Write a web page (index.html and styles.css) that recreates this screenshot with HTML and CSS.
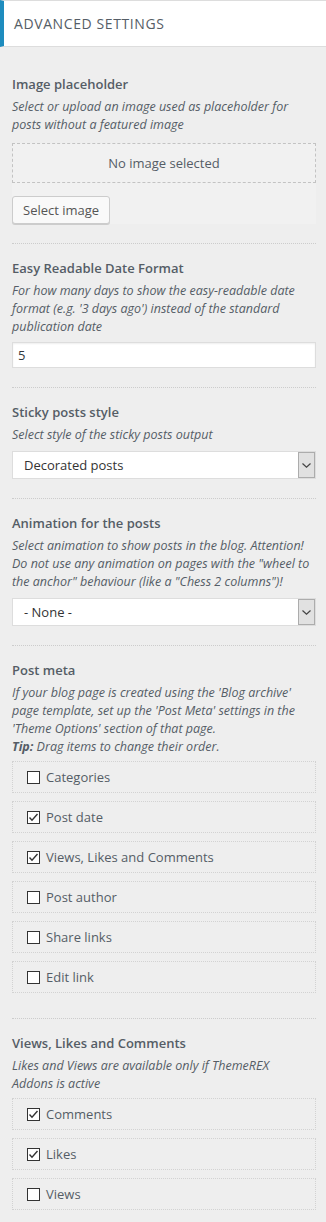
FILE: index.html
```html
<!DOCTYPE html>
<html lang="en">
<head>
  <meta charset="UTF-8">
  <meta name="viewport" content="width=device-width, initial-scale=1.0">
  <title>Advanced Settings</title>
  <link rel="stylesheet" href="styles.css">
</head>
<body>
  <h3 class="section-title">Advanced Settings</h3>

  <ul class="controls">
    <li class="control">
      <span class="control-title">Image placeholder</span>
      <span class="control-desc">Select or upload an image used as placeholder for<br>posts without a featured image</span>
      <div class="media-view">
        <div class="placeholder">No image selected</div>
        <div class="media-actions">
          <button type="button" class="button">Select image</button>
        </div>
      </div>
    </li>

    <li class="control">
      <span class="control-title">Easy Readable Date Format</span>
      <span class="control-desc">For how many days to show the easy-readable date<br>format (e.g. '3 days ago') instead of the standard<br>publication date</span>
      <input type="text" class="text-input" value="5">
    </li>

    <li class="control">
      <span class="control-title">Sticky posts style</span>
      <span class="control-desc">Select style of the sticky posts output</span>
      <div class="select-wrap">
        <select>
          <option selected>Decorated posts</option>
          <option>Inherit</option>
          <option>Columns</option>
        </select>
        <span class="select-arrow">
          <svg width="9" height="5" viewBox="0 0 9 5"><polyline points="0.5,0.5 4.5,4.2 8.5,0.5" fill="none" stroke="#444" stroke-width="1.2"/></svg>
        </span>
      </div>
    </li>

    <li class="control">
      <span class="control-title">Animation for the posts</span>
      <span class="control-desc">Select animation to show posts in the blog. Attention!<br>Do not use any animation on pages with the "wheel to<br>the anchor" behaviour (like a "Chess 2 columns")!</span>
      <div class="select-wrap">
        <select>
          <option selected>- None -</option>
          <option>Fade in</option>
          <option>Fade in up</option>
        </select>
        <span class="select-arrow">
          <svg width="9" height="5" viewBox="0 0 9 5"><polyline points="0.5,0.5 4.5,4.2 8.5,0.5" fill="none" stroke="#444" stroke-width="1.2"/></svg>
        </span>
      </div>
    </li>

    <li class="control">
      <span class="control-title">Post meta</span>
      <span class="control-desc">If your blog page is created using the 'Blog archive'<br>page template, set up the 'Post Meta' settings in the<br>'Theme Options' section of that page.<br><b>Tip:</b> Drag items to change their order.</span>
      <ul class="sortable" id="post-meta"></ul>
    </li>

    <li class="control">
      <span class="control-title">Views, Likes and Comments</span>
      <span class="control-desc">Likes and Views are available only if ThemeREX<br>Addons is active</span>
      <ul class="sortable" id="counters"></ul>
    </li>
  </ul>

  <script>
    const postMeta = [
      { label: 'Categories', checked: false },
      { label: 'Post date', checked: true },
      { label: 'Views, Likes and Comments', checked: true },
      { label: 'Post author', checked: false },
      { label: 'Share links', checked: false },
      { label: 'Edit link', checked: false },
    ];

    const counters = [
      { label: 'Comments', checked: true },
      { label: 'Likes', checked: true },
      { label: 'Views', checked: false },
    ];

    // Checkmark drawn inside the custom checkbox
    const tick = '<svg width="11" height="11" viewBox="0 0 11 11"><polyline points="1.5,5.5 4,8.2 9.5,2" fill="none" stroke="#333" stroke-width="1.4"/></svg>';

    function renderList(id, items) {
      const list = document.getElementById(id);
      items.forEach(item => {
        const row = document.createElement('li');
        row.classList.add('sortable-item');
        row.innerHTML = `<label>
            <span class="checkbox">${item.checked ? tick : ''}</span>
            <span>${item.label}</span>
          </label>`;
        list.appendChild(row);
      });
    }

    renderList('post-meta', postMeta);
    renderList('counters', counters);
  </script>
</body>
</html>
```

FILE: styles.css
```css
* {
  box-sizing: border-box;
}

body {
  margin: 0;
  background-color: #eee;
  font-family: "Open Sans", "Noto Sans", sans-serif;
  font-size: 13px;
  color: #555d66;
}

ul {
  list-style: none;
  margin: 0;
  padding: 0;
}

/* Section header */
.section-title {
  margin: 0;
  padding: 11px 10px 10px;
  line-height: 24px;
  font-size: 14px;
  font-weight: 400;
  letter-spacing: 0.6px;
  text-transform: uppercase;
  color: #555d66;
  background-color: #fff;
  border-top: 1px solid #ddd;
  border-bottom: 1px solid #ddd;
  border-left: 4px solid #1e8cbe;
}

.controls {
  padding: 13px 10px 0 12px;
}

.control {
  padding: 14px 0 19px;
  border-bottom: 1px dotted #ccc;
}

.control-title {
  display: block;
  font-size: 13px;
  font-weight: 600;
  line-height: 20px;
  margin-bottom: 4px;
}

.control-desc {
  display: block;
  font-size: 12.5px;
  font-style: italic;
  line-height: 18px;
}

/* Image picker */
.media-view {
  margin-top: 9px;
  background-color: #f1f1f1;
}

.placeholder {
  padding: 9px 0;
  line-height: 20px;
  text-align: center;
  border: 1px dashed #c3c3c3;
}

.media-actions {
  margin-top: 13px;
}

.button {
  height: 28px;
  padding: 0 10px 1px;
  font-family: inherit;
  font-size: 13px;
  line-height: 26px;
  color: #555;
  background-color: #f9f9f9;
  border: 1px solid #ccc;
  border-radius: 3px;
  box-shadow: 0 1px 0 #ccc;
  cursor: pointer;
}

/* Text input */
.text-input {
  display: block;
  width: 100%;
  height: 26px;
  margin: 6px 0 0;
  padding: 0 5px;
  font-family: inherit;
  font-size: 13px;
  color: #32373c;
  background-color: #fff;
  border: 1px solid #ddd;
  box-shadow: inset 0 1px 2px rgba(0, 0, 0, 0.07);
  outline: none;
}

/* Select with windows-like arrow */
.select-wrap {
  display: flex;
  height: 28px;
  margin-top: 7px;
  background-color: #fff;
  border: 1px solid #ddd;
}

.select-wrap select {
  flex: 1;
  min-width: 0;
  padding: 0 0 0 11px;
  font-family: inherit;
  font-size: 13px;
  color: #333;
  background: transparent;
  border: 0;
  appearance: none;
  -webkit-appearance: none;
  outline: none;
}

.select-arrow {
  display: flex;
  align-items: center;
  justify-content: center;
  width: 17px;
  background-color: #e1e1e1;
  border: 1px solid #acacac;
}

/* Sortable checklist */
.sortable {
  margin-top: 5px;
}

.sortable-item {
  height: 32px;
  margin-bottom: 8px;
  padding: 0 14px;
  display: flex;
  align-items: center;
  border: 1px dotted #d2d2d2;
}

.sortable-item:last-child {
  margin-bottom: 6px;
}

.sortable-item label {
  display: flex;
  align-items: center;
  gap: 6px;
  line-height: 20px;
}

.checkbox {
  display: flex;
  align-items: center;
  justify-content: center;
  width: 13px;
  height: 13px;
  background-color: #fff;
  border: 1px solid #333;
}
```
